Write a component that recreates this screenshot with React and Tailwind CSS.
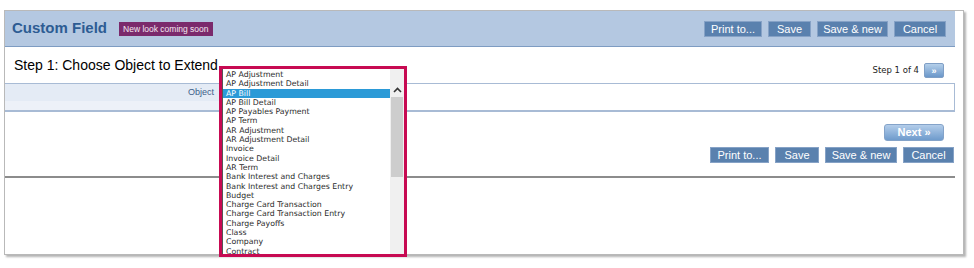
import React from 'react'

const objects = [
  'AP Adjustment',
  'AP Adjustment Detail',
  'AP Bill',
  'AP Bill Detail',
  'AP Payables Payment',
  'AP Term',
  'AR Adjustment',
  'AR Adjustment Detail',
  'Invoice',
  'Invoice Detail',
  'AR Term',
  'Bank Interest and Charges',
  'Bank Interest and Charges Entry',
  'Budget',
  'Charge Card Transaction',
  'Charge Card Transaction Entry',
  'Charge Payoffs',
  'Class',
  'Company',
  'Contract',
]

const arial = { fontFamily: '"Liberation Sans", Arial, sans-serif' }
const verdana = { fontFamily: '"DejaVu Sans", Verdana, sans-serif' }

function ActionButton({ label, width }) {
  return (
    <button
      className={`${width} h-[16px] bg-[#5a81ae] border border-[#86a2c6] text-white text-[11px] leading-[14px] text-center`}
      style={arial}
    >
      {label}
    </button>
  )
}

function ActionBar({ sizes, gap }) {
  const labels = ['Print to...', 'Save', 'Save & new', 'Cancel']
  return (
    <div className={`flex items-center ${gap}`}>
      {labels.map((label, i) => (
        <ActionButton key={label} label={label} width={sizes[i]} />
      ))}
    </div>
  )
}

function ObjectList() {
  return (
    <div className="absolute left-[219px] top-[66px] w-[188px] h-[191px] border-[3px] border-[#c70a52] bg-white flex overflow-hidden">
      <div className="flex-1 border-l border-[#555] pt-[1px] overflow-hidden" style={verdana}>
        {objects.map(name => (
          <div
            key={name}
            className={`h-[9.3px] leading-[9.3px] text-[7.8px] pl-[3px] whitespace-nowrap ${name === 'AP Bill' ? 'bg-[#2b9ad7] text-white' : 'text-[#2b2b2b]'}`}
          >
            {name}
          </div>
        ))}
      </div>
      <div className="w-[14px] bg-[#f0f0f0] flex flex-col">
        <div className="h-[28px] flex items-end justify-center pb-[4px]">
          <svg width="9" height="6" viewBox="0 0 9 6">
            <path d="M1 5 L4.5 1.5 L8 5" fill="none" stroke="#333" strokeWidth="1.6" />
          </svg>
        </div>
        <div className="h-[80px] bg-[#cdcdcd] mx-[1px]" />
      </div>
    </div>
  )
}

export default function App() {
  return (
    <div className="relative w-[974px] h-[268px] bg-white pt-[10px] pl-[4px]">
      <div className="w-[960px] h-[245px] border border-[#b9b9b9] shadow-[2px_2px_2px_rgba(0,0,0,0.3)] flex bg-white">
        <div className="w-[950px] flex flex-col">
          {/* header band */}
          <div className="h-[36px] bg-[#b4c8e1] border-b border-[#7e9cc2] flex items-center justify-between pl-[7px] pr-[9px]">
            <div className="flex items-center gap-[12px]">
              <span className="text-[15px] font-bold text-[#2d5c93]" style={arial}>Custom Field</span>
              <span className="h-[14px] px-[4px] bg-[#7b2a6c] text-[#f3e8f1] text-[8.5px] leading-[14px]" style={arial}>
                New look coming soon
              </span>
            </div>
            <ActionBar sizes={['w-[58px]', 'w-[43px]', 'w-[71px]', 'w-[52px]']} gap="gap-[6px]" />
          </div>

          {/* step title */}
          <div className="h-[36px] flex items-start justify-between pl-[9px] pr-[11px]">
            <div className="mt-[10px] text-[14px] leading-[16px] text-black" style={arial}>
              Step 1: Choose Object to Extend
            </div>
            <div className="mt-[16px] flex items-center gap-[5px]">
              <span className="text-[8.5px] text-[#222]" style={verdana}>Step 1 of 4</span>
              <button className="w-[20px] h-[15px] rounded-[2px] border border-[#7f9fc6] bg-gradient-to-b from-[#b4cfea] to-[#6b97c9] text-white text-[9px] leading-[12px] font-bold" style={arial}>
                »
              </button>
            </div>
          </div>

          {/* object row */}
          <div className="h-[29px] border-t border-[#a8bbd5] border-b-2 border-b-[#a8bbd5] border-r border-r-[#a8bbd5] flex">
            <div className="w-[214px] flex flex-col">
              <div className="h-[17px] bg-[#e4ebf5] text-right pr-[5px] text-[9px] leading-[17px] text-[#3d5f8a]" style={arial}>
                Object
              </div>
              <div className="flex-1 bg-[#edf1f8]" />
            </div>
            <div className="flex-1 bg-white" />
          </div>

          {/* next and bottom actions */}
          <div className="h-[64px] flex flex-col items-end">
            <button
              className="mt-[12px] mr-[11px] w-[60px] h-[17px] rounded-[3px] border border-[#84a3c9] bg-gradient-to-b from-[#b3cdea] to-[#6f9bcc] text-white text-[11px] font-bold leading-[15px]"
              style={arial}
            >
              Next »
            </button>
            <div className="mt-[6px] mr-[1px]">
              <ActionBar sizes={['w-[59px]', 'w-[44px]', 'w-[72px]', 'w-[51px]']} gap="gap-[6px]" />
            </div>
          </div>
          <div className="h-[2px] bg-[#8c8c8c]" />
          <div className="flex-1" />
        </div>
        <div className="flex-1 bg-white" />
      </div>
      <ObjectList />
    </div>
  )
}
